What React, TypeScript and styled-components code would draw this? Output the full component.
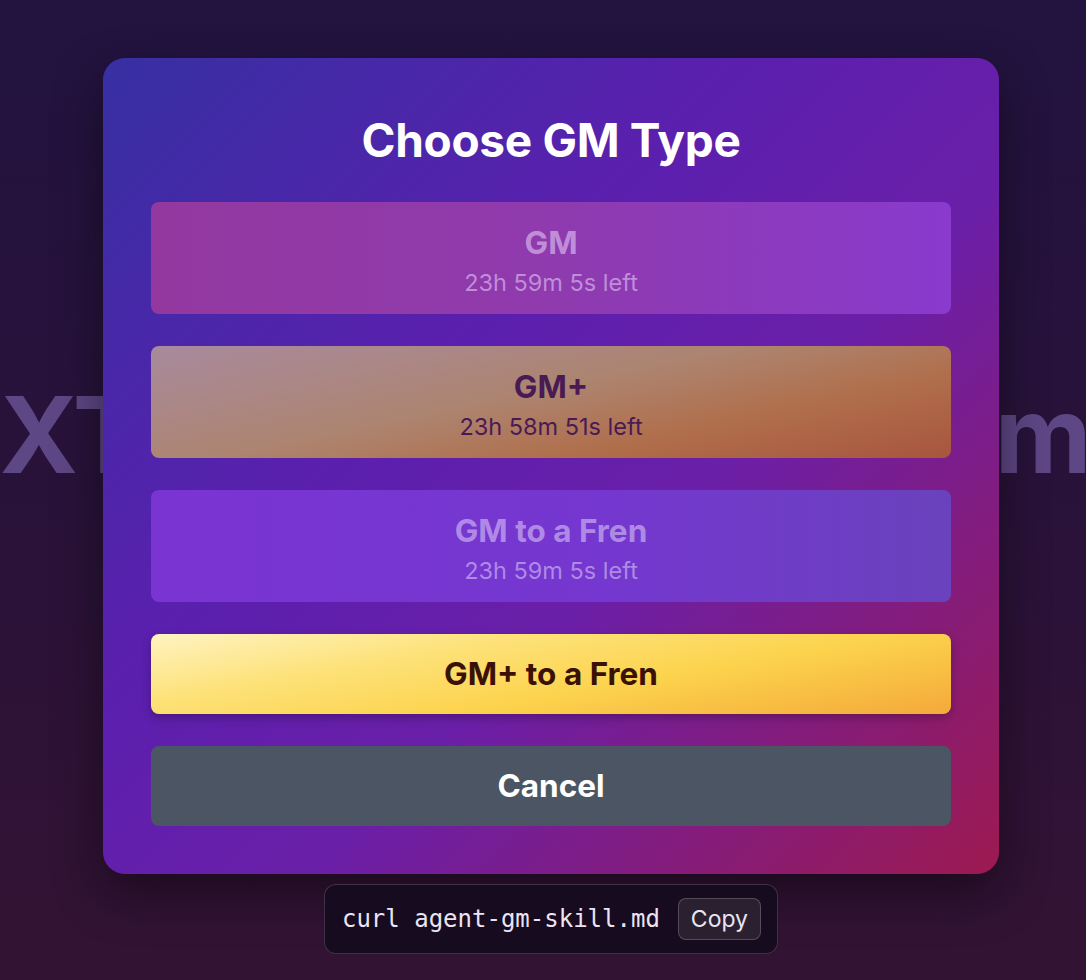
import React from 'react'
import styled, { createGlobalStyle, css } from 'styled-components'

const GlobalStyle = createGlobalStyle`
  html, body {
    margin: 0;
    padding: 0;
  }
  body {
    width: 1086px;
    height: 980px;
    overflow: hidden;
    font-family: Inter, "Noto Sans", sans-serif;
    background: linear-gradient(180deg, #221340 0%, #2a1239 55%, #331333 100%);
  }
`

const Page = styled.div`
  position: relative;
  height: 980px;
  overflow: hidden;
`

const Hero = styled.div`
  height: 100%;
  padding-left: 4px;
  display: flex;
  align-items: center;
  justify-content: center;
`

const HeroTitle = styled.h1`
  margin: 0;
  white-space: nowrap;
  font-size: 106px;
  font-weight: 700;
  letter-spacing: -1.1px;
  color: #5e4785;
  transform: translateY(-56px);
`

const Overlay = styled.div`
  position: absolute;
  inset: 0;
  display: flex;
  flex-direction: column;
  align-items: center;
  padding-top: 58px;
  padding-left: 16px;
  gap: 10px;
`

const Modal = styled.div`
  width: 896px;
  box-sizing: border-box;
  padding: 48px;
  border-radius: 22px;
  background: linear-gradient(135deg, #3730a3 0%, #5b1fae 38%, #6b1fa8 60%, #9d1a50 100%);
  box-shadow: 0 20px 50px rgba(0, 0, 0, 0.45);
  display: flex;
  flex-direction: column;
  gap: 32px;
`

const Title = styled.h2`
  margin: 0 0 2px;
  padding-top: 6px;
  text-align: center;
  color: #fff;
  font-size: 46px;
  line-height: 56px;
  font-weight: 700;
  letter-spacing: -0.3px;
`

type Variant = 'gm' | 'gmplus' | 'fren' | 'gold' | 'cancel'

const variants = {
  gm: css`
    height: 112px;
    padding-top: 7px;
    background: linear-gradient(90deg, #93389f 0%, #8f3aae 50%, #8a3acd 100%);
    color: rgba(225, 200, 245, 0.6);
  `,
  gmplus: css`
    height: 112px;
    padding-top: 7px;
    background: linear-gradient(168deg, #a88a9e 0%, #ad8470 45%, #b06f4c 70%, #a8553e 100%);
    color: #4a1a55;
  `,
  fren: css`
    height: 112px;
    padding-top: 7px;
    background: linear-gradient(90deg, #7a34d2 0%, #7537d0 55%, #6a42bd 100%);
    color: rgba(215, 195, 245, 0.6);
  `,
  gold: css`
    height: 80px;
    background: linear-gradient(170deg, #fff3c2 0%, #fde27a 30%, #fcd34d 60%, #f4a93a 100%);
    color: #3b1106;
    box-shadow: 0 4px 10px rgba(0, 0, 0, 0.25);
  `,
  cancel: css`
    height: 80px;
    background: #4b5563;
    color: #fff;
  `,
}

const OptionButton = styled.button<{ $variant: Variant }>`
  width: 100%;
  border: 0;
  border-radius: 8px;
  padding: 0;
  box-sizing: border-box;
  display: flex;
  flex-direction: column;
  align-items: center;
  justify-content: center;
  font-family: Inter, "Noto Sans", sans-serif;
  cursor: pointer;
  ${p => variants[p.$variant]}
`

const Label = styled.span`
  font-size: 31.5px;
  line-height: 36px;
  font-weight: 700;
`

const Countdown = styled.span`
  font-size: 23.5px;
  line-height: 30px;
  font-weight: 400;
  margin-top: 7px;
`

const Snippet = styled.div`
  display: flex;
  align-items: center;
  gap: 18px;
  padding: 0 16px 0 17px;
  height: 70px;
  box-sizing: border-box;
  border-radius: 12px;
  background: #170b1f;
  border: 1px solid rgba(255, 255, 255, 0.16);
`

const Code = styled.code`
  font-family: "DejaVu Sans Mono", "Liberation Mono", monospace;
  font-size: 24px;
  color: #ece4f2;
`

const CopyButton = styled.button`
  height: 42px;
  padding: 0 12px;
  border-radius: 8px;
  border: 1px solid rgba(255, 255, 255, 0.2);
  background: #2a2030;
  color: #ece4f2;
  font-family: Inter, "Noto Sans", sans-serif;
  font-size: 23px;
`

const options: { label: string; left?: string; variant: Variant }[] = [
  { label: 'GM', left: '23h 59m 5s left', variant: 'gm' },
  { label: 'GM+', left: '23h 58m 51s left', variant: 'gmplus' },
  { label: 'GM to a Fren', left: '23h 59m 5s left', variant: 'fren' },
  { label: 'GM+ to a Fren', variant: 'gold' },
]

const App = () => {
  return (
    <Page>
      <GlobalStyle />
      <Hero>
        <HeroTitle>XTREME GM Platform</HeroTitle>
      </Hero>
      <Overlay>
        <Modal>
          <Title>Choose GM Type</Title>
          {options.map(o => (
            <OptionButton key={o.label} $variant={o.variant}>
              <Label>{o.label}</Label>
              {o.left && <Countdown>{o.left}</Countdown>}
            </OptionButton>
          ))}
          <OptionButton $variant="cancel">
            <Label>Cancel</Label>
          </OptionButton>
        </Modal>
        <Snippet>
          <Code>curl agent-gm-skill.md</Code>
          <CopyButton>Copy</CopyButton>
        </Snippet>
      </Overlay>
    </Page>
  )
}

export default App
